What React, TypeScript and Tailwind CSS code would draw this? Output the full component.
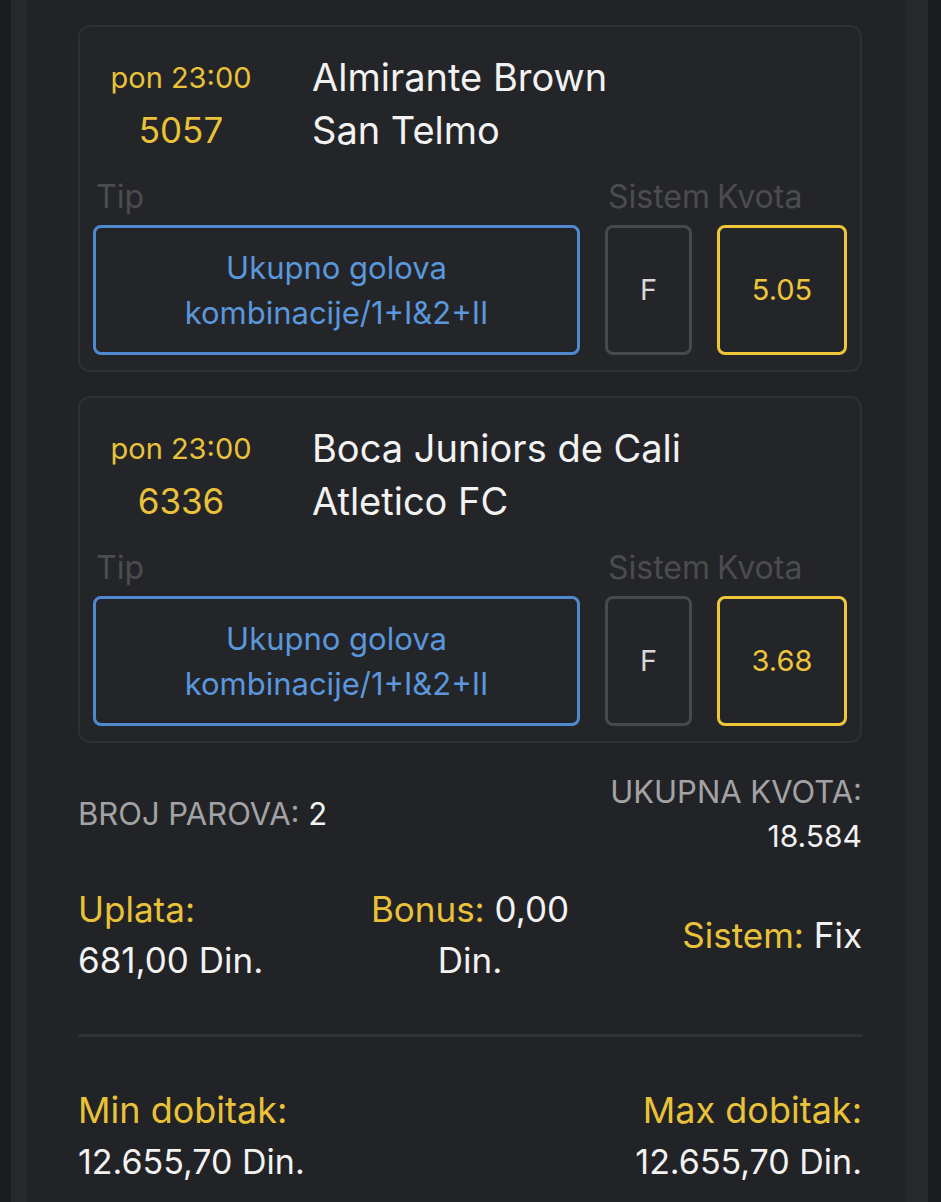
import React from "react";

type Match = {
  time: string;
  code: string;
  home: string;
  away: string;
  tip: string[];
  system: string;
  odds: string;
};

const matches: Match[] = [
  {
    time: "pon 23:00",
    code: "5057",
    home: "Almirante Brown",
    away: "San Telmo",
    tip: ["Ukupno golova", "kombinacije/1+I&2+II"],
    system: "F",
    odds: "5.05",
  },
  {
    time: "pon 23:00",
    code: "6336",
    home: "Boca Juniors de Cali",
    away: "Atletico FC",
    tip: ["Ukupno golova", "kombinacije/1+I&2+II"],
    system: "F",
    odds: "3.68",
  },
];

function MatchCard({ m }: { m: Match }) {
  return (
    <div className="rounded-xl border-2 border-[#2f3033] bg-[#242528] px-[13px] pt-[24px] pb-[15px]">
      <div className="flex">
        <div className="w-[176px] text-center text-[#e9c23a]">
          <div className="flex h-[53px] items-center justify-center text-[29px]">{m.time}</div>
          <div className="flex h-[53px] items-center justify-center text-[35px]">{m.code}</div>
        </div>
        <div className="ml-[43px] whitespace-nowrap text-[38px] text-[#f2f2f2]">
          <div className="flex h-[53px] items-center">{m.home}</div>
          <div className="flex h-[53px] items-center">{m.away}</div>
        </div>
      </div>

      <div className="mt-[20px] grid grid-cols-[487px_87px_130px] gap-x-[25px] text-[32px] text-[#4b4c4f]">
        <div className="flex h-[40px] items-center pl-[3px]">Tip</div>
        <div className="flex h-[40px] items-center whitespace-nowrap pl-[3px]">Sistem</div>
        <div className="flex h-[40px] items-center">Kvota</div>
      </div>

      <div className="mt-[8px] grid grid-cols-[487px_87px_130px] gap-x-[25px]">
        <div className="flex h-[130px] flex-col items-center justify-center rounded-lg border-[3px] border-[#4f8ad0] text-[31px] leading-[45px] text-[#5a97dc]">
          {m.tip.map((t) => (
            <div key={t}>{t}</div>
          ))}
        </div>
        <div className="flex h-[130px] items-center justify-center rounded-lg border-[3px] border-[#48494c] text-[29px] text-[#d8d8d8]">
          {m.system}
        </div>
        <div className="flex h-[130px] items-center justify-center rounded-lg border-[3px] border-[#efc63a] text-[29px] text-[#efc63a]">
          {m.odds}
        </div>
      </div>
    </div>
  );
}

export default function App() {
  return (
    <div
      className="flex min-h-[1202px] bg-[#1b1c1f]"
      style={{ fontFamily: "Inter, 'Noto Sans', sans-serif" }}
    >
      <div className="ml-[11px] flex w-[917px] pl-[16px] pr-[23px] bg-[#27282b]">
        <div className="w-full bg-[#222326] pt-[25px]">
          <div className="ml-[51px] w-[784px]">
            <div className="flex flex-col gap-[24px]">
              {matches.map((m) => (
                <MatchCard key={m.code} m={m} />
              ))}
            </div>

            <div className="mt-[26px] flex items-center justify-between">
              <div className="text-[31px] text-[#a3a3a5]">
                BROJ PAROVA: <span className="text-[#f2f2f2]">2</span>
              </div>
              <div className="text-right text-[31px] leading-[45px]">
                <div className="text-[#a3a3a5]">UKUPNA KVOTA:</div>
                <div className="text-[30px] text-[#f2f2f2]">18.584</div>
              </div>
            </div>

            <div className="mt-[25px] grid grid-cols-3 items-center text-[35px] leading-[51px]">
              <div className="whitespace-nowrap">
                <div className="text-[#e9c23a]">Uplata:</div>
                <div className="text-[#f2f2f2]">681,00 Din.</div>
              </div>
              <div className="text-center whitespace-nowrap">
                <div>
                  <span className="text-[#e9c23a]">Bonus:</span>{" "}
                  <span className="text-[#f2f2f2]">0,00</span>
                </div>
                <div className="text-[#f2f2f2]">Din.</div>
              </div>
              <div className="text-right whitespace-nowrap">
                <span className="text-[#e9c23a]">Sistem:</span>{" "}
                <span className="text-[#f2f2f2]">Fix</span>
              </div>
            </div>

            <div className="mt-[48px] h-[3px] bg-[#313235]" />

            <div className="mt-[48px] flex justify-between leading-[51px]">
              <div>
                <div className="text-[36px] text-[#e9c23a]">Min dobitak:</div>
                <div className="text-[34px] text-[#f2f2f2]">12.655,70 Din.</div>
              </div>
              <div className="text-right">
                <div className="text-[36px] text-[#e9c23a]">Max dobitak:</div>
                <div className="text-[34px] text-[#f2f2f2]">12.655,70 Din.</div>
              </div>
            </div>
          </div>
        </div>
      </div>
    </div>
  );
}
